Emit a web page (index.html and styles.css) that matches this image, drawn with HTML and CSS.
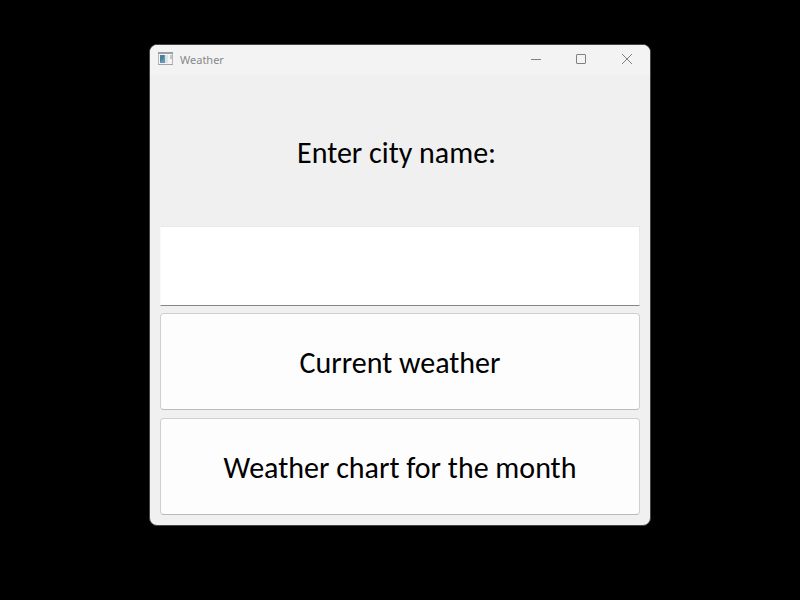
FILE: index.html
```html
<!DOCTYPE html>
<html lang="en">
<head>
<meta charset="utf-8">
<meta name="viewport" content="width=device-width, initial-scale=1">
<title>Weather</title>
<link rel="stylesheet" href="styles.css">
</head>
<body>
<main class="window">
  <header class="titlebar">
    <svg class="app-icon" width="16" height="14" viewBox="0 0 16 14" aria-hidden="true">
      <rect x="0.5" y="0.5" width="14" height="12" fill="#f4f4f4" stroke="#b4b8ba"/>
      <path d="M0 1h15" stroke="#9aa1a6" stroke-width="2"/>
      <path d="M0 12.5h15" stroke="#a0a4a6"/>
      <rect x="2" y="3" width="5" height="8" fill="#6596b5"/>
      <path d="M2 3h4v3l-4 4z" fill="#4c7f9f"/>
      <rect x="7" y="3" width="3" height="8" fill="#dce4e9"/>
      <rect x="12" y="3" width="2" height="4" fill="#c4c4c4"/>
    </svg>
    <h1 class="title">Weather</h1>
    <div class="controls">
      <button class="control" type="button" aria-label="Minimize"><svg width="12" height="12" viewBox="0 0 12 12"><path d="M2 6.5h10"/></svg></button>
      <button class="control" type="button" aria-label="Maximize"><svg width="12" height="12" viewBox="0 0 12 12"><rect x="1.5" y="1.5" width="9" height="9" rx="0.5"/></svg></button>
      <button class="control" type="button" aria-label="Close"><svg width="12" height="12" viewBox="0 0 12 12"><path d="M1 1l10 10M11 1L1 11"/></svg></button>
    </div>
  </header>
  <form class="content">
    <label class="prompt" for="city">Enter city name:&nbsp;</label>
    <input class="city" id="city" type="text">
    <button class="action" type="button">Current weather</button>
    <button class="action" type="button">Weather chart for the month</button>
  </form>
</main>
</body>
</html>
```
FILE: styles.css
```css
* {
  box-sizing: border-box;
}

body {
  margin: 0;
  min-height: 100vh;
  padding: 44px 16px;
  background: #000;
  color: #000;
  font-family: Carlito, Calibri, Lato, "Open Sans", sans-serif;
}

.window {
  width: 100%;
  max-width: 502px;
  margin: 0 auto;
  border: 1px solid #444;
  border-radius: 8px;
  overflow: hidden;
  background: #f0f0f0;
}

.titlebar {
  display: flex;
  align-items: center;
  height: 30px;
  padding: 0 0 2px 8px;
  gap: 6px;
  background: #f3f3f3;
}

.title {
  flex: 1;
  margin: 0;
  padding-top: 2px;
  color: #888;
  font: 11px/16px "Noto Sans", sans-serif;
}

.controls {
  display: flex;
}

.control {
  display: grid;
  place-items: center;
  width: 46px;
  height: 28px;
  padding: 0;
  border: 0;
  background: transparent;
}

.control svg {
  fill: none;
  stroke: #808080;
}

.content {
  display: flex;
  flex-direction: column;
  padding: 0 10px 10px;
}

.prompt {
  padding: 60px 0 55px;
  font-size: 30px;
  line-height: 36px;
  text-align: center;
}

.city {
  width: 100%;
  height: 80px;
  padding: 0 8px;
  border: 1px solid #e9e9e9;
  border-left-color: #fafafa;
  border-bottom-color: #868686;
  border-radius: 0;
  background: #fff;
  font: inherit;
  font-size: 30px;
}

.action {
  margin: 7px 0 0;
  padding: 31px 0 28px;
  border: 1px solid #d0d0d0;
  border-bottom-color: #bababa;
  border-radius: 4px;
  background: #fdfdfd;
  color: #000;
  font: inherit;
  font-size: 30px;
  line-height: 36px;
}

.action + .action {
  margin-top: 8px;
}
```
